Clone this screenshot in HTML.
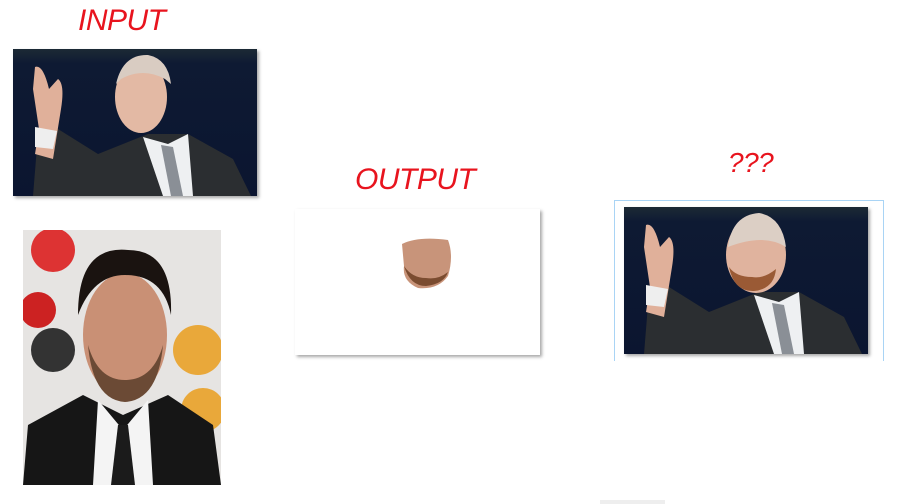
<!DOCTYPE html><html><head><style>
body{margin:0;width:908px;height:504px;background:#fff;position:relative;overflow:hidden;font-family:"Liberation Sans",sans-serif}
.t{position:absolute;color:#e8141e;font-style:italic;font-size:30px;letter-spacing:-0.5px}
.a{position:absolute}
.sh{box-shadow:2px 2px 3px rgba(0,0,0,.35)}
</style></head><body>
<div class="t" style="left:78px;top:4px">INPUT</div>
<div class="t" style="left:355px;top:163px">OUTPUT</div>
<div class="t" style="left:728px;top:147px;font-size:28px">???</div>

<svg class="a sh" style="left:13px;top:49px" width="244" height="147" viewBox="0 0 244 147">
<defs><linearGradient id="bg" x1="0" y1="0" x2="0" y2="1"><stop offset="0" stop-color="#1c2a35"/><stop offset=".1" stop-color="#0e1a33"/><stop offset="1" stop-color="#0b1530"/></linearGradient></defs>
<rect width="244" height="147" fill="url(#bg)"/>
<path d="M20 147 L25 85 L45 80 L85 105 L135 85 L175 85 L220 110 L238 147Z" fill="#2b2e31"/>
<path d="M130 88 L155 95 L175 85 L180 147 L150 147Z" fill="#eef0f2"/>
<path d="M148 96 L160 98 L170 147 L158 147Z" fill="#8a8f96"/>
<ellipse cx="128" cy="48" rx="26" ry="36" fill="#e3b9a4"/>
<path d="M103 35 Q110 5 135 6 Q155 10 158 35 L152 30 Q130 18 108 30Z" fill="#d9ccc2"/>
<path d="M22 18 Q30 15 36 40 L45 30 Q52 35 48 60 L40 110 L22 105 L26 80 L20 40Z" fill="#e0b09a"/>
<path d="M22 78 L44 82 L40 100 L22 98Z" fill="#eee"/>
</svg>

<svg class="a" style="left:23px;top:230px" width="198" height="255" viewBox="0 0 198 255">
<rect width="198" height="255" fill="#e6e4e2"/>
<circle cx="30" cy="20" r="22" fill="#d33"/><circle cx="30" cy="120" r="22" fill="#333"/><circle cx="15" cy="80" r="18" fill="#c22"/>
<circle cx="175" cy="120" r="25" fill="#e9a83a"/><circle cx="180" cy="180" r="22" fill="#e9a83a"/>
<path d="M0 255 L5 195 L60 165 L100 185 L145 165 L190 195 L198 255Z" fill="#161616"/>
<path d="M75 170 L100 200 L125 170 L130 255 L70 255Z" fill="#f4f4f4"/>
<path d="M95 195 L105 195 L112 255 L88 255Z" fill="#1b1b1b"/>
<ellipse cx="102" cy="105" rx="42" ry="62" fill="#c99075"/>
<path d="M65 115 Q70 170 102 172 Q135 170 140 115 Q130 150 102 150 Q75 150 65 115Z" fill="#6b4a35"/>
<path d="M55 85 Q55 15 105 20 Q150 20 148 85 Q140 45 102 45 Q70 45 55 85Z" fill="#1a1310"/>
</svg>

<div class="a sh" style="left:295px;top:209px;width:245px;height:146px;background:#fff"></div>
<svg class="a" style="left:398px;top:236px" width="56" height="54" viewBox="0 0 56 54">
<path d="M4 8 Q20 0 50 4 Q56 20 50 40 Q40 54 20 52 Q4 45 6 30Z" fill="#c8947a"/>
<path d="M6 30 Q12 50 28 50 Q46 48 50 36 Q40 44 28 42 Q14 42 6 30Z" fill="#7b4c30"/>
</svg>

<div class="a" style="left:614px;top:200px;width:268px;height:160px;border:1px solid #a9d4f5;border-bottom:none"></div>
<svg class="a sh" style="left:624px;top:207px" width="244" height="147" viewBox="0 0 244 147">
<rect width="244" height="147" fill="url(#bg)"/>
<path d="M20 147 L25 85 L45 80 L85 105 L135 85 L175 85 L220 110 L238 147Z" fill="#2b2e31"/>
<path d="M130 88 L155 95 L175 85 L180 147 L150 147Z" fill="#eef0f2"/>
<path d="M148 96 L160 98 L170 147 L158 147Z" fill="#8a8f96"/>
<ellipse cx="132" cy="48" rx="30" ry="38" fill="#e0b39e"/>
<path d="M104 40 Q108 8 135 6 Q158 10 162 40 Q140 26 104 40Z" fill="#dccfc5"/>
<path d="M105 60 Q110 85 130 84 Q150 82 152 62 Q140 72 128 70 Q112 70 105 60Z" fill="#9a5a35"/>
<path d="M22 18 Q30 15 36 40 L45 30 Q52 35 48 60 L40 110 L22 105 L26 80 L20 40Z" fill="#e0b09a"/>
<path d="M22 78 L44 82 L40 100 L22 98Z" fill="#eee"/>
</svg>
<div class="a" style="left:600px;top:500px;width:65px;height:4px;background:#eee"></div>
</body></html>
